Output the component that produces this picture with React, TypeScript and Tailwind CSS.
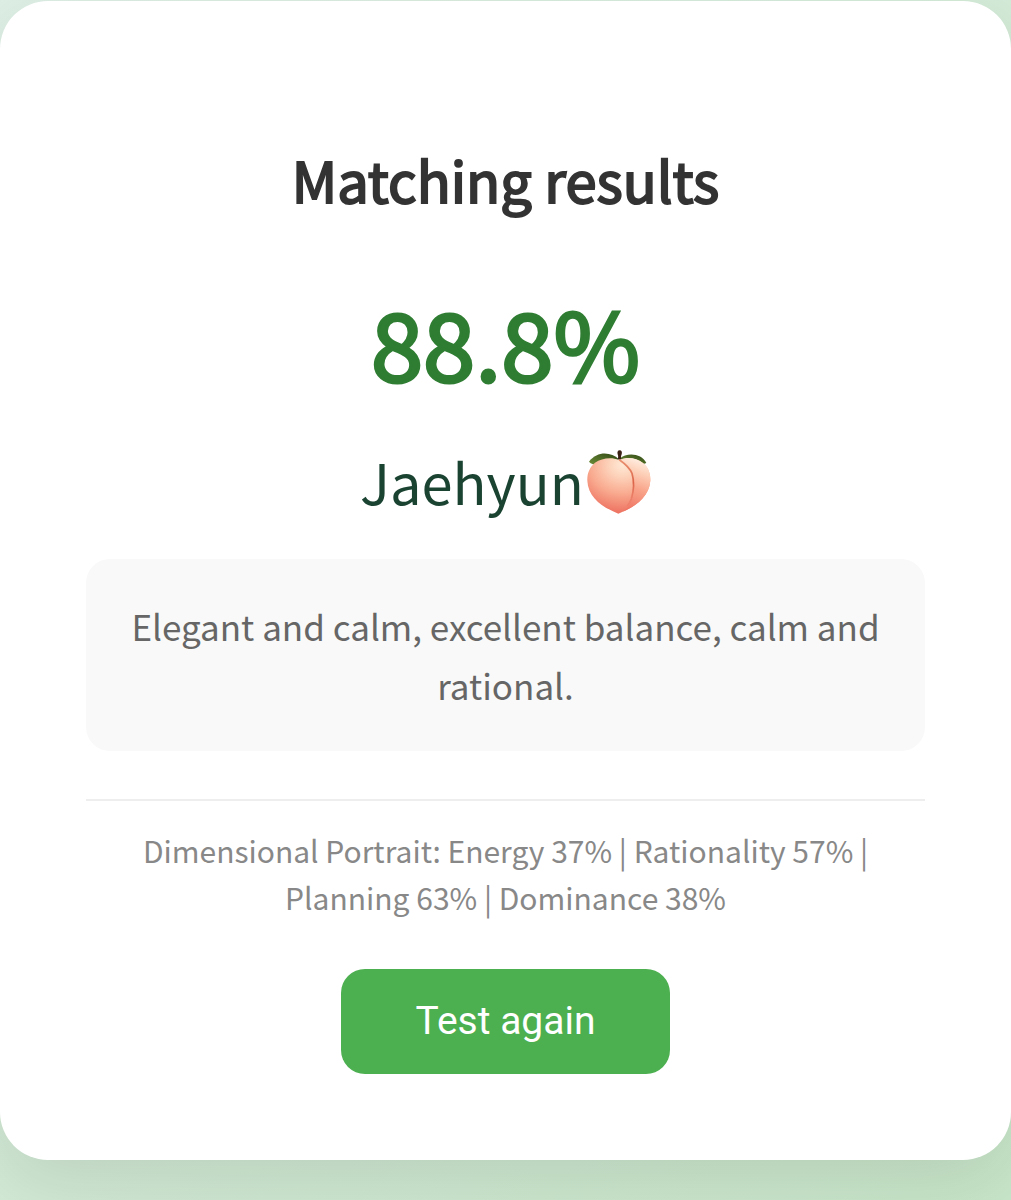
import React, { useState } from 'react';

interface Dimension {
  label: string;
  value: number;
}

const dimensions: Dimension[] = [
  { label: 'Energy', value: 37 },
  { label: 'Rationality', value: 57 },
  { label: 'Planning', value: 63 },
  { label: 'Dominance', value: 38 },
];

const PeachIcon: React.FC = () => (
  <svg viewBox="0 0 192 198" className="h-[66px] w-16" role="img" aria-label="peach">
    <defs>
      <radialGradient id="peach-body" cx="0.56" cy="0.12" r="0.85">
        <stop offset="0" stopColor="#ffe9d6" />
        <stop offset="0.25" stopColor="#fdd3bb" />
        <stop offset="0.6" stopColor="#f9ac91" />
        <stop offset="1" stopColor="#ee7563" />
      </radialGradient>
      <linearGradient id="peach-side" x1="0.6" y1="0" x2="0.4" y2="1">
        <stop offset="0" stopColor="#fff0e4" />
        <stop offset="0.25" stopColor="#fdd0b8" />
        <stop offset="0.55" stopColor="#f9a58b" />
        <stop offset="1" stopColor="#ee7463" />
      </linearGradient>
      <linearGradient id="peach-crease" x1="0" y1="0" x2="0" y2="1">
        <stop offset="0" stopColor="#e9906f" />
        <stop offset="0.5" stopColor="#dc6549" />
        <stop offset="1" stopColor="#e66b57" stopOpacity="0.3" />
      </linearGradient>
      <linearGradient id="peach-leaf" x1="0" y1="1" x2="1" y2="0">
        <stop offset="0" stopColor="#6f8f38" />
        <stop offset="1" stopColor="#2f4714" />
      </linearGradient>
    </defs>
    <g transform="translate(0 6)">
      <path d="M96 28C72 6 32 2 6 35c12 14 50 14 90-7Z" fill="url(#peach-leaf)" />
      <path d="M98 26c22-20 66-16 80 13-12 7-54 7-80-13Z" fill="url(#peach-leaf)" />
      <path
        d="M96 30C74 20 44 24 24 38 7 52 0 72 1 92c2 52 50 82 93 99 44-17 93-49 96-99 1-24-8-42-22-53-20-16-48-18-72-9Z"
        fill="url(#peach-body)"
      />
      <path
        d="M98 29c24-9 50-6 70 10 14 11 23 29 22 53-3 46-42 76-82 93 14-11 22-22 26-39 6-26 6-52-2-76-8-19-20-29-34-41Z"
        fill="url(#peach-side)"
      />
      <path
        d="M98 30c14 10 29 21 37 40 7 24 6 50-2 76-3 9-7 15-12 21"
        fill="none"
        stroke="url(#peach-crease)"
        strokeWidth="5"
        strokeLinecap="round"
      />
      <path d="M92 28c2-7 2-10 0-15-2-7 0-12 6-12s8 5 6 12c-2 5-3 9-1 15Z" fill="#3b2015" />
    </g>
  </svg>
);

const App: React.FC = () => {
  const [visible, setVisible] = useState(true);

  // Start over
  const handleRetest = () => {
    setVisible(false);
    window.setTimeout(() => setVisible(true), 300);
  };

  const portrait = dimensions.map((d) => `${d.label} ${d.value}%`).join(' | ');

  return (
    <div className="min-h-screen overflow-hidden bg-linear-135 from-[#deefe5] to-[#c8e6c9] pt-px font-['Noto_Sans_CJK_SC',sans-serif]">
      <main className="rounded-[48px] bg-white px-[86px] pt-[134px] pb-[86px] text-center shadow-[0_24px_72px_rgba(0,0,0,0.1)]">
        {visible && (
          <>
            <h1 className="text-[56px] leading-[88px] text-[#333333] [-webkit-text-stroke:2px]">
              Matching results
            </h1>
            <p className="mt-12 text-[94px] leading-[140px] text-[#2e7d32] [-webkit-text-stroke:3px]">
              88.8%
            </p>
            <h2 className="mt-7 flex items-center justify-center gap-[3px] text-[56px] leading-[84px] text-[#1b4332]">
              Jaehyun
              <PeachIcon />
            </h2>
            <p className="mt-9 rounded-[24px] bg-[#f9f9f9] px-9 py-[37px] text-[35px] leading-[59px] text-[#666666]">
              Elegant and calm, excellent balance, calm and rational.
            </p>
            <p className="mt-12 border-t-2 border-[#eeeeee] px-9 pt-[26px] text-[30px] leading-[47px] text-[#888888]">
              {`Dimensional Portrait: ${portrait}`}
            </p>
            <button
              type="button"
              onClick={handleRetest}
              className="mt-12 rounded-[24px] bg-[#4caf50] px-[75px] py-6 font-[Roboto,sans-serif] text-[39px] leading-[57px] text-white"
            >
              Test again
            </button>
          </>
        )}
      </main>
    </div>
  );
};

export default App;
